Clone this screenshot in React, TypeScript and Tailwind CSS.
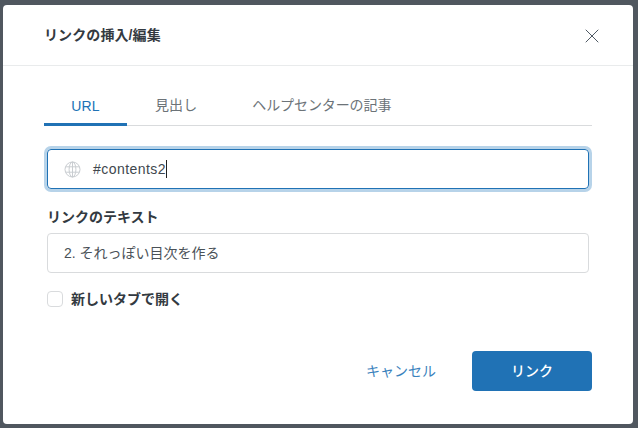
import { X } from "lucide-react";

const font = { fontFamily: '"Liberation Sans", "Noto Sans CJK JP", sans-serif' };

const GlobeIcon = () => (
  <svg width="17" height="17" viewBox="0 0 17 17" fill="none" stroke="#c9cdd1" strokeWidth="1">
    <circle cx="8.5" cy="8.5" r="7.5" />
    <ellipse cx="8.5" cy="8.5" rx="3.4" ry="7.5" />
    <path d="M8.5 1v15M1.6 5.8h13.8M1.6 11.2h13.8" />
  </svg>
);

const App = () => {
  return (
    <div className="h-[428px] w-[638px] overflow-hidden bg-[#50575f] pl-[3px] pt-[5px]" style={font}>
      <div className="flex h-[419px] w-[630px] flex-col rounded-[4px] bg-white">
        <div className="flex h-[61px] items-center justify-between border-b border-[#e9ebec] pl-[41px] pr-[29px]">
          <h2 className="text-sm font-bold tracking-[0.1px] text-[#333a41]">リンクの挿入/編集</h2>
          <X size={24} strokeWidth={1} className="mt-[1px] text-[#4f5963]" />
        </div>

        <div className="mx-[41px] mt-[30px] flex h-[30px] border-b border-[#d9dbdd] text-sm">
          <div className="flex h-[30px] w-[83px] items-start justify-center border-b-[3px] border-[#2072b5] text-[#2072b5]">
            <span className="tracking-[0.1px]">URL</span>
          </div>
          <div className="ml-[28px] mt-[-1px] tracking-[0.1px] text-[#6c7378]">見出し</div>
          <div className="ml-[55px] mt-[-1px] tracking-[-0.1px] text-[#6c7378]">ヘルプセンターの記事</div>
        </div>

        <div className="ml-[44px] mt-[23px] flex h-[40px] w-[542px] items-center rounded-[4px] border border-[#2072b5] pl-[16px] shadow-[0_0_0_3px_#b7d3e9]">
          <GlobeIcon />
          <span className="ml-[12px] text-sm tracking-[0.45px] text-[#40474e]">#contents2</span>
          <span className="h-[18px] w-px bg-[#222]" />
        </div>

        <label className="ml-[44px] mt-[19px] text-sm leading-[18px] font-bold text-[#333a41]">リンクのテキスト</label>
        <div className="ml-[44px] mt-[7px] flex h-[40px] w-[542px] items-center rounded-[4px] border border-[#d9dbdd] pl-[16px] text-sm text-[#4a5157]">
          2. それっぽい目次を作る
        </div>

        <div className="ml-[44px] mt-[16px] flex items-center gap-2">
          <span className="h-[16px] w-[16px] rounded-[4px] border border-[#d9dbdd]" />
          <span className="text-sm font-bold text-[#333a41]">新しいタブで開く</span>
        </div>

        <div className="mr-[41px] mt-auto mb-[33px] flex items-center justify-end">
          <button className="mr-[36px] text-sm text-[#3a82bd]">キャンセル</button>
          <button className="h-[40px] w-[120px] rounded-[4px] bg-[#2072b5] text-sm font-medium text-white">リンク</button>
        </div>
      </div>
    </div>
  );
};

export default App;
